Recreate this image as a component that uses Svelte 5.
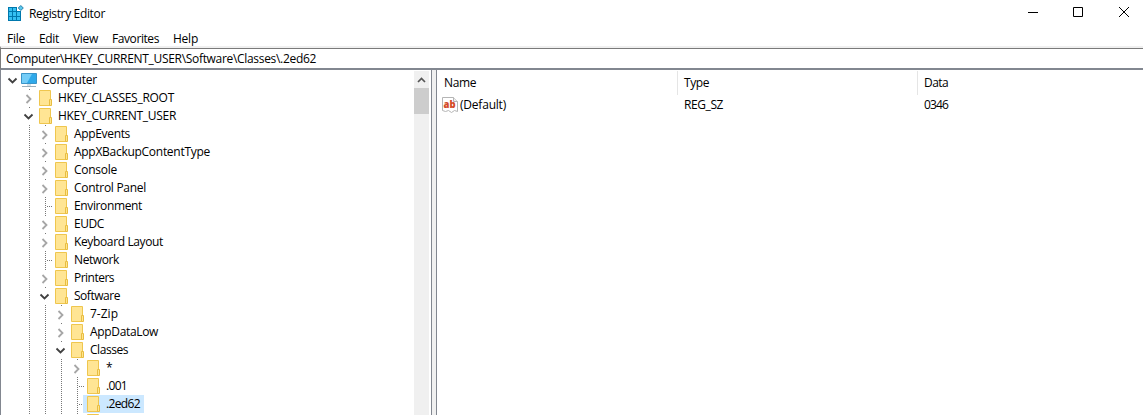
<script>
  const rows = [
    { n: 'Computer', l: 0, s: 'open', w: 55 },
    { n: 'HKEY_CLASSES_ROOT', l: 1, s: 'closed', w: 116 },
    { n: 'HKEY_CURRENT_USER', l: 1, s: 'open', w: 118 },
    { n: 'AppEvents', l: 2, s: 'closed', w: 56 },
    { n: 'AppXBackupContentType', l: 2, s: 'closed', w: 136 },
    { n: 'Console', l: 2, s: 'closed', w: 43 },
    { n: 'Control Panel', l: 2, s: 'closed', w: 72 },
    { n: 'Environment', l: 2, s: 'leaf', w: 68 },
    { n: 'EUDC', l: 2, s: 'closed', w: 30 },
    { n: 'Keyboard Layout', l: 2, s: 'closed', w: 89 },
    { n: 'Network', l: 2, s: 'leaf', w: 45 },
    { n: 'Printers', l: 2, s: 'closed', w: 40 },
    { n: 'Software', l: 2, s: 'open', w: 46 },
    { n: '7-Zip', l: 3, s: 'closed', w: 28 },
    { n: 'AppDataLow', l: 3, s: 'closed', w: 68 },
    { n: 'Classes', l: 3, s: 'open', w: 38 },
    { n: '*', l: 4, s: 'closed', w: 5 },
    { n: '.001', l: 4, s: 'leaf', w: 21 },
    { n: '.2ed62', l: 4, s: 'leaf', w: 34, sel: true },
    { n: '', l: 4, s: 'leaf', w: 0 }
  ];
  const menus = [['File', 18], ['Edit', 20], ['View', 25], ['Favorites', 47], ['Help', 25]];

  // Tracks a label so that it fills its nominal width.
  function fit(node, width) {
    if (!width) return;
    const natural = node.getBoundingClientRect().width;
    node.style.letterSpacing = (width - natural) / node.textContent.length + 'px';
  }
</script>

<div class="window">
  <header class="title">
    <svg class="app" width="16" height="16" viewBox="0 0 16 16">
      <path d="M0 2h9v4h4v10H0z" fill="#0078ad" />
      <path d="M1 3h3v3H1zM5 3h3v3H5zM1 7h3v4H1zM5 7h3v4H5zM9 7h3v4H9zM1 12h3v3H1zM5 12h3v3H5zM9 12h3v3H9z" fill="#35c0f2" />
      <path d="M12.800.500 15.300 3l-2.500 2.500L10.300 3z" fill="#5ac9ef" stroke="#2780aa" />
    </svg>
    <span class="name" use:fit={76}>Registry Editor</span>
    <svg class="controls" width="103" height="12" viewBox="0 0 103 12" fill="none" stroke="#000">
      <path d="M0 6.500h10M45.500 1.500h9v9h-9zM91 1l10 10M101 1L91 11" />
    </svg>
  </header>
  <nav>
    {#each menus as [m, w]}<span use:fit={w}>{m}</span>{/each}
  </nav>
  <div class="address"><span use:fit={310}>Computer\HKEY_CURRENT_USER\Software\Classes\.2ed62</span></div>
  <main>
    <section class="tree">
      <div class="rows">
        {#each rows as r}
          <div class="row">
            <svg class="lines" width={18 + r.l * 16} height="18">
              {#each Array(Math.max(0, r.l - 1)) as _, i}
                <path class="dots" d="M{28.5 + i * 16 - 1 + 1} 0v18" />
              {/each}
              {#if r.l && r.s === 'leaf'}
                <path class="dots" d="M{12.5 + r.l * 16} 0v18" />
                <path class="dots" d="M{14 + r.l * 16} 9.500h6" />
              {:else if r.l}
                <path class="dots" d="M{12.5 + r.l * 16} 0v1" />
              {/if}
              {#if r.s === 'open'}
                <path d="M{7.5 + r.l * 16} 7.500l4 4 4-4" fill="none" stroke="#404040" stroke-width="1.8" />
              {:else if r.s === 'closed'}
                <path d="M{9.5 + r.l * 16} 6l4 4-4 4" fill="none" stroke="#a6a6a6" stroke-width="1.8" />
              {/if}
            </svg>
            <span class="item" class:sel={r.sel}>
              {#if r.l === 0}
                <svg width="19" height="18" viewBox="-2 0 19 18">
                  <path d="M.5 2.500h15v10H.5z" fill="#2fa9ea" stroke="#3a94c8" />
                  <path d="M1 3h10L6 12H1z" fill="#74cdf8" />
                  <path d="M6 13h4v2H6z" fill="#d5e0e7" />
                  <path d="M1 15.500h14" stroke="#9aaebb" />
                </svg>
              {:else}
                <svg width="19" height="18" viewBox="-1 0 19 18">
                  <path d="M3.500 1.500h11v15h-11z" fill="#ffe594" stroke="#efc64e" />
                  <path d="M13.500 10.500h2v6h-2z" fill="#ffe58d" stroke="#e8bd42" />
                </svg>
              {/if}
              <span class="label" use:fit={r.w}>{r.n}</span>
            </span>
          </div>
        {/each}
      </div>
      <div class="scroll">
        <svg width="15" height="17" viewBox="0 0 15 17"><path d="M4 11l3.500-3.500L11 11" fill="none" stroke="#555" stroke-width="1.700" /></svg>
        <div class="thumb"></div>
      </div>
    </section>
    <div class="split"></div>
    <section class="values">
      <div class="head">
        <div><span use:fit={32}>Name</span></div>
        <div><span use:fit={25}>Type</span></div>
        <div><span use:fit={24}>Data</span></div>
      </div>
      <div class="value">
        <div class="key">
          <svg class="string" width="16" height="16" viewBox="0 0 16 16">
            <path d="M.5.5h11l4 4v10l-3-1-3 2-3-2-3 1-3-1z" fill="#fff" stroke="#b5b5b5" />
            <path d="M11.500.5v4h4" fill="#eee" stroke="#b5b5b5" />
            <text x="1.500" y="11" font-size="11" font-weight="800" fill="#d34b27" textLength="12" lengthAdjust="spacingAndGlyphs">ab</text>
          </svg>
          <span use:fit={46}>(Default)</span>
        </div>
        <div><span use:fit={39}>REG_SZ</span></div>
        <div><span use:fit={24}>0346</span></div>
      </div>
    </section>
  </main>
</div>

<style>
  .window {
    width: 1143px;
    height: 415px;
    overflow: hidden;
    display: flex;
    flex-direction: column;
    background: #fff;
    color: #000;
    font: 12px/18px "Open Sans", "Noto Sans", sans-serif;
    white-space: nowrap;
  }
  svg { display: block; flex: none; }
  .title { height: 27px; flex: none; display: flex; align-items: center; padding: 0 12px 0 8px; box-sizing: border-box; }
  .app { margin-right: 5px; margin-bottom: 2px; }
  .controls { margin-left: auto; margin-bottom: 3px; }
  nav { height: 19px; flex: none; display: flex; gap: 14px; padding: 2px 7px 0; box-sizing: border-box; line-height: 19px; }
  .address { height: 24px; flex: none; box-sizing: border-box; border: 1px solid #7a7a7a; border-top: 2px solid #f0f0f0; border-bottom: 2px solid #828790; border-right: 0; box-shadow: inset 0 1px #7a7a7a; padding: 2px 0 0 5px; line-height: 18px; }
  main { flex: 1; min-height: 0; display: flex; }
  .tree { width: 431px; box-sizing: border-box; border-left: 1px solid #828790; padding-top: 1px; display: flex; }
  .rows { width: 413px; flex: none; }
  .row { height: 18px; display: flex; }
  .lines, .string, .app { overflow: visible; }
  .dots { stroke: #777; stroke-dasharray: 1 1; fill: none; }
  .item { display: flex; height: 18px; padding-right: 4px; }
  .label { margin-left: 4px; }
  .sel { background: #cce8ff; }
  .scroll { width: 15px; background: #f0f0f0; }
  .thumb { height: 26px; background: #cdcdcd; }
  .split { width: 4px; background: #f0f0f0; border: solid #828790; border-width: 0 1px; }
  .values { flex: 1; padding-top: 1px; }
  .head, .value { display: grid; grid-template-columns: 240px 240px 1fr; }
  .head { height: 24px; }
  .head > div { padding-left: 6px; box-sizing: border-box; line-height: 24px; border-left: 1px solid #e5e5e5; }
  .head > div:first-child { padding-left: 7px; border-left: 0; }
  .value { height: 20px; line-height: 20px; }
  .value > div { padding-left: 7px; }
  .value > .key { display: flex; gap: 2px; align-items: center; padding-left: 5px; }
</style>
